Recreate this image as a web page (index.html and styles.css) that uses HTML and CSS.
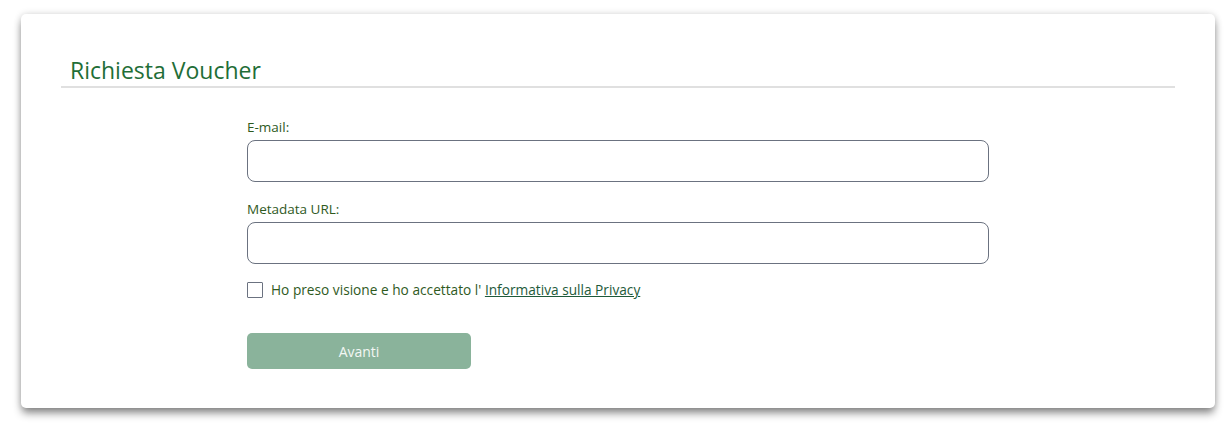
FILE: index.html
```html
<!DOCTYPE html>
<html lang="it">
<head>
<meta charset="utf-8">
<title>Richiesta Voucher</title>
<link rel="stylesheet" href="styles.css">
</head>
<body>
<div class="card">
  <div class="header">
    <h1 class="title">Richiesta Voucher</h1>
  </div>
  <form class="form">
    <div class="field">
      <label class="label" for="email">E-mail:</label>
      <input class="input" id="email" type="text">
    </div>
    <div class="field">
      <label class="label" for="meta">Metadata URL:</label>
      <input class="input" id="meta" type="text">
    </div>
    <div class="check-row">
      <span class="checkbox"></span>
      <span class="check-text">Ho preso visione e ho accettato l' <a class="link" href="#">Informativa sulla Privacy</a></span>
    </div>
    <button class="btn" type="button">Avanti</button>
  </form>
</div>
</body>
</html>
```
FILE: styles.css
```css
html, body {
  margin: 0;
  padding: 0;
  background: #ffffff;
}
body {
  font-family: "Open Sans", "Noto Sans", sans-serif;
  padding: 14px 16px 19px 21px;
}
.card {
  background: #fff;
  border-radius: 5px;
  box-shadow: 0 6px 8px -1px rgba(0,0,0,0.45), 0 0 7px rgba(0,0,0,0.15);
  height: 394px;
  box-sizing: border-box;
  padding: 0 40px;
}
.header {
  padding-top: 41px;
  border-bottom: 2px solid #e0e0e0;
}
.title {
  margin: 0;
  padding-left: 9px;
  font-weight: 400;
  font-size: 23px;
  line-height: 31px;
  color: #1f6e37;
}
.form {
  width: 742px;
  margin: 0 auto;
  padding-top: 30px;
  display: flex;
  flex-direction: column;
}
.field {
  display: flex;
  flex-direction: column;
  margin-bottom: 18px;
}
.label {
  font-size: 13.5px;
  line-height: 18px;
  color: #2f5a1e;
  margin-bottom: 4px;
}
.input {
  height: 42px;
  box-sizing: border-box;
  border: 1px solid #6b7280;
  border-radius: 8px;
  background: #fff;
  font: inherit;
}
.check-row {
  display: flex;
  align-items: center;
  gap: 8px;
  margin-top: -1px;
}
.checkbox {
  width: 16px;
  height: 16px;
  box-sizing: border-box;
  border: 1px solid #6b7280;
  border-radius: 1px;
}
.check-text {
  font-size: 13.7px;
  line-height: 18px;
  color: #2f5a1e;
}
.link {
  color: #1e5a3a;
  text-decoration: underline;
}
.btn {
  margin-top: 34px;
  width: 224px;
  height: 36px;
  border: none;
  border-radius: 5px;
  background: #8ab39b;
  color: #f3f7f4;
  font-family: inherit;
  font-size: 14px;
}
```
